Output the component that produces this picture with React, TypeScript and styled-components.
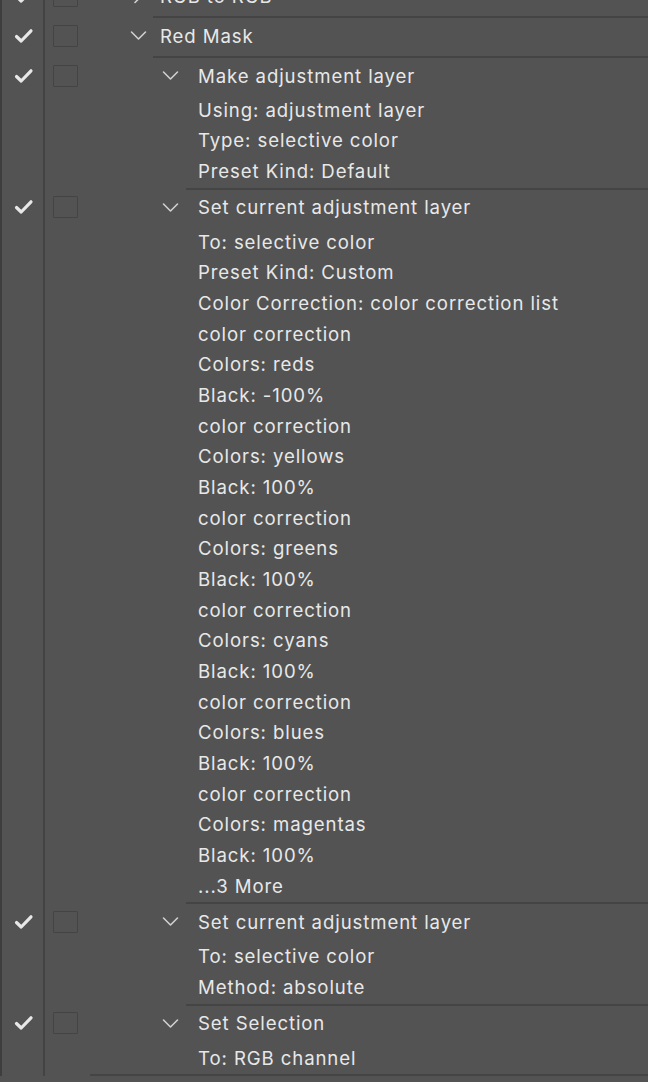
import styled, { createGlobalStyle } from 'styled-components'

const GlobalStyle = createGlobalStyle`
  html, body {
    margin: 0;
    padding: 0;
    background: #535353;
    overflow: hidden;
  }
`

type Entry =
  | { type: 'head'; level: 1 | 2; text: string; open: boolean }
  | { type: 'item'; text: string }
  | { type: 'rule'; from: number }

// x positions measured from the start of the tree area (x = 90)
const LEVELS = {
  1: { chevron: 40, text: 70, rule: 63 },
  2: { chevron: 72, text: 108, rule: 96 },
}

const ENTRIES: Entry[] = [
  { type: 'head', level: 1, text: 'RGB to RGB', open: false },
  { type: 'rule', from: LEVELS[1].rule },
  { type: 'head', level: 1, text: 'Red Mask', open: true },
  { type: 'rule', from: LEVELS[1].rule },
  { type: 'head', level: 2, text: 'Make adjustment layer', open: true },
  { type: 'item', text: 'Using: adjustment layer' },
  { type: 'item', text: 'Type: selective color' },
  { type: 'item', text: 'Preset Kind: Default' },
  { type: 'rule', from: LEVELS[2].rule },
  { type: 'head', level: 2, text: 'Set current adjustment layer', open: true },
  { type: 'item', text: 'To: selective color' },
  { type: 'item', text: 'Preset Kind: Custom' },
  { type: 'item', text: 'Color Correction: color correction list' },
  { type: 'item', text: 'color correction' },
  { type: 'item', text: 'Colors: reds' },
  { type: 'item', text: 'Black: -100%' },
  { type: 'item', text: 'color correction' },
  { type: 'item', text: 'Colors: yellows' },
  { type: 'item', text: 'Black: 100%' },
  { type: 'item', text: 'color correction' },
  { type: 'item', text: 'Colors: greens' },
  { type: 'item', text: 'Black: 100%' },
  { type: 'item', text: 'color correction' },
  { type: 'item', text: 'Colors: cyans' },
  { type: 'item', text: 'Black: 100%' },
  { type: 'item', text: 'color correction' },
  { type: 'item', text: 'Colors: blues' },
  { type: 'item', text: 'Black: 100%' },
  { type: 'item', text: 'color correction' },
  { type: 'item', text: 'Colors: magentas' },
  { type: 'item', text: 'Black: 100%' },
  { type: 'item', text: '...3 More' },
  { type: 'rule', from: LEVELS[2].rule },
  { type: 'head', level: 2, text: 'Set current adjustment layer', open: true },
  { type: 'item', text: 'To: selective color' },
  { type: 'item', text: 'Method: absolute' },
  { type: 'rule', from: LEVELS[2].rule },
  { type: 'head', level: 2, text: 'Set Selection', open: true },
  { type: 'item', text: 'To: RGB channel' },
  { type: 'rule', from: 0 },
]

function CheckIcon() {
  return (
    <svg width="20" height="16" viewBox="0 0 20 16">
      <path d="M2.5 8.5 L7.2 13 L17 2.8" fill="none" stroke="#e8e8e8" strokeWidth="3.2" strokeLinecap="round" strokeLinejoin="round" />
    </svg>
  )
}

function Chevron({ open }: { open: boolean }) {
  return (
    <svg width="17" height="17" viewBox="0 0 17 17">
      {open ? (
        <path d="M1.5 5 L8.5 12 L15.5 5" fill="none" stroke="#d0d0d0" strokeWidth="1.6" strokeLinecap="round" strokeLinejoin="round" />
      ) : (
        <path d="M5 1.5 L12 8.5 L5 15.5" fill="none" stroke="#d0d0d0" strokeWidth="1.6" strokeLinecap="round" strokeLinejoin="round" />
      )}
    </svg>
  )
}

export default function App() {
  return (
    <>
      <GlobalStyle />
      <Panel>
        {ENTRIES.map((entry, i) => {
          if (entry.type === 'rule') {
            return (
              <Row key={i} $height={2}>
                <Gutter />
                <Rule $from={entry.from} />
              </Row>
            )
          }
          if (entry.type === 'head') {
            const lv = LEVELS[entry.level]
            return (
              <Row key={i} $height={38}>
                <Gutter>
                  <CheckCell>
                    <CheckIcon />
                  </CheckCell>
                  <BoxCell>
                    <Box />
                  </BoxCell>
                </Gutter>
                <Main $indent={lv.chevron}>
                  <ChevronSlot $width={lv.text - lv.chevron}>
                    <Chevron open={entry.open} />
                  </ChevronSlot>
                  <Label>{entry.text}</Label>
                </Main>
              </Row>
            )
          }
          return (
            <Row key={i} $height={30.67}>
              <Gutter />
              <Main $indent={LEVELS[2].text}>
                <Label>{entry.text}</Label>
              </Main>
            </Row>
          )
        })}
      </Panel>
    </>
  )
}

const Panel = styled.div`
  margin-top: -22px;
  display: flex;
  flex-direction: column;
  width: 648px;
  background: #535353;
  font-family: Inter, 'Noto Sans', sans-serif;
  font-size: 18.6px;
  color: #e8e8e8;
`

const Row = styled.div<{ $height: number }>`
  display: flex;
  align-items: stretch;
  height: ${(p) => p.$height}px;
  flex-shrink: 0;
`

const Gutter = styled.div`
  display: flex;
  width: 90px;
  flex-shrink: 0;
  border-left: 2px solid #3e3e3e;
  box-sizing: border-box;
  background: linear-gradient(to right, transparent 41px, #434343 41px, #434343 43px, transparent 43px);
`

const CheckCell = styled.div`
  width: 43px;
  display: flex;
  align-items: center;
  justify-content: center;
  padding-bottom: 3px;
  box-sizing: border-box;
`

const BoxCell = styled.div`
  flex: 1;
  display: flex;
  align-items: center;
  padding-left: 8px;
  padding-bottom: 3px;
`

const Box = styled.div`
  width: 25px;
  height: 22px;
  box-sizing: border-box;
  border: 1.5px solid #444444;
  border-radius: 1px;
`

const Main = styled.div<{ $indent: number }>`
  flex: 1;
  display: flex;
  align-items: center;
  padding-left: ${(p) => p.$indent}px;
  padding-bottom: 3px;
  white-space: nowrap;
`

const ChevronSlot = styled.div<{ $width: number }>`
  width: ${(p) => p.$width}px;
  flex-shrink: 0;
  display: flex;
  align-items: center;
`

const Label = styled.span`
  letter-spacing: 0.9px;
`

const Rule = styled.div<{ $from: number }>`
  flex: 1;
  margin-left: ${(p) => p.$from}px;
  background: #444444;
`
